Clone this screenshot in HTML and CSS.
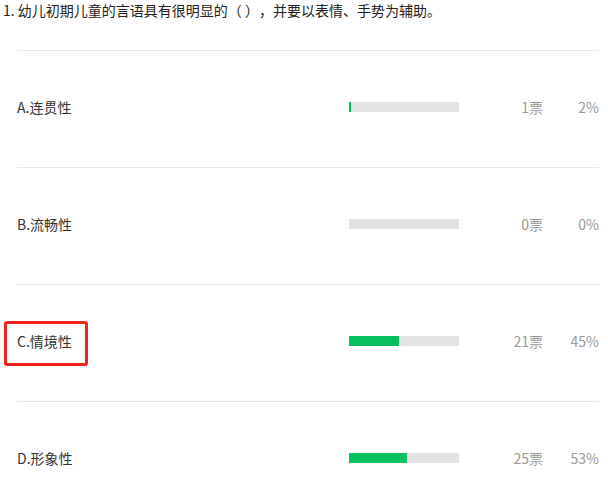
FILE: index.html
```html
<!DOCTYPE html>
<html lang="zh-CN">
<head>
  <meta charset="UTF-8" />
  <meta name="viewport" content="width=device-width, initial-scale=1.0" />
  <title>投票结果</title>
  <link rel="stylesheet" href="styles.css">
</head>
<body>
  <div class="question">1. 幼儿初期儿童的言语具有很明显的（ ），并要以表情、手势为辅助。</div>

  <ul class="options">
    <li class="option">
      <span class="label">A.连贯性</span>
      <div class="bar"><div class="fill" style="width:2%"></div></div>
      <span class="votes">1票</span>
      <span class="pct">2%</span>
    </li>
    <li class="option">
      <span class="label">B.流畅性</span>
      <div class="bar"><div class="fill" style="width:0%"></div></div>
      <span class="votes">0票</span>
      <span class="pct">0%</span>
    </li>
    <li class="option">
      <span class="label marked">C.情境性</span>
      <div class="bar"><div class="fill" style="width:45%"></div></div>
      <span class="votes">21票</span>
      <span class="pct">45%</span>
    </li>
    <li class="option">
      <span class="label">D.形象性</span>
      <div class="bar"><div class="fill" style="width:53%"></div></div>
      <span class="votes">25票</span>
      <span class="pct">53%</span>
    </li>
  </ul>
</body>
</html>
```

FILE: styles.css
```css
body {
  margin: 0;
  font-family: "Microsoft YaHei", "Noto Sans CJK SC", sans-serif;
  font-size: 14px;
  color: #222;
  background: #fff;
}
.question {
  padding-left: 3px;
  line-height: 20px;
  margin-bottom: 30px;
  white-space: pre;
  text-spacing-trim: space-all;
}
.options {
  list-style: none;
  margin: 0 0 0 17px;
  padding: 0;
  width: 582px;
}
.option {
  display: flex;
  align-items: center;
  border-top: 1px solid #e8e8e8;
  padding: 46px 0 50px;
  height: 20px;
}
.label {
  width: 332px;
  line-height: 20px;
  color: #333;
  position: relative;
}
.label.marked::after {
  content: "";
  position: absolute;
  left: -13px;
  top: -10px;
  width: 78px;
  height: 39px;
  border: 3px solid #f4221c;
  border-radius: 3px;
}
.bar {
  width: 110px;
  height: 10px;
  background: #e2e3e5;
}
.fill {
  height: 100%;
  background: #07c160;
}
.votes {
  width: 84px;
  text-align: right;
  color: #999;
}
.pct {
  width: 56px;
  text-align: right;
  color: #999;
}
```
